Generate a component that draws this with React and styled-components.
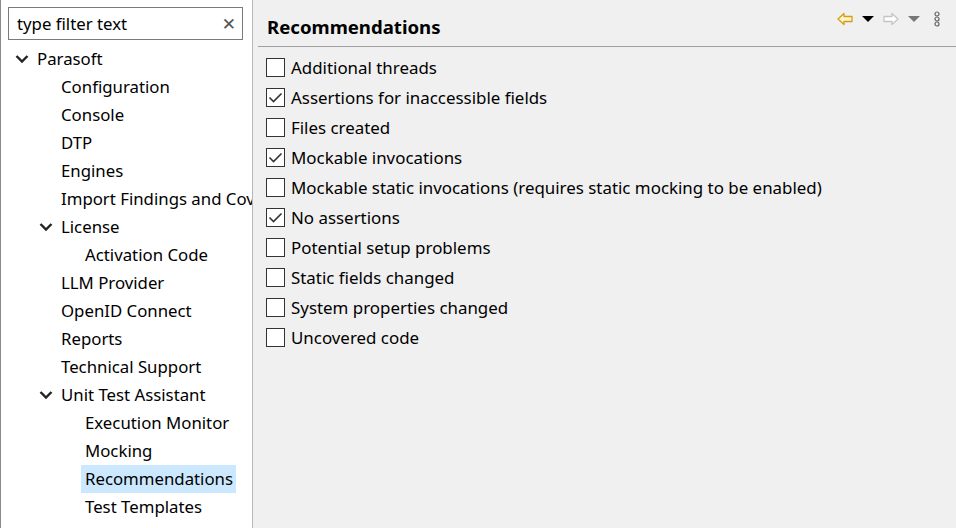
import React from 'react'
import styled, { createGlobalStyle } from 'styled-components'

const GlobalStyle = createGlobalStyle`
  html, body {
    margin: 0;
    padding: 0;
    background: #f0f0f0;
  }
  body {
    font-family: 'Noto Sans', 'Open Sans', sans-serif;
    color: #000;
  }
`

const tree = [
  { label: 'Parasoft', depth: 0, open: true },
  { label: 'Configuration', depth: 1 },
  { label: 'Console', depth: 1 },
  { label: 'DTP', depth: 1 },
  { label: 'Engines', depth: 1 },
  { label: 'Import Findings and Coverage', depth: 1 },
  { label: 'License', depth: 1, open: true },
  { label: 'Activation Code', depth: 2 },
  { label: 'LLM Provider', depth: 1 },
  { label: 'OpenID Connect', depth: 1 },
  { label: 'Reports', depth: 1 },
  { label: 'Technical Support', depth: 1 },
  { label: 'Unit Test Assistant', depth: 1, open: true },
  { label: 'Execution Monitor', depth: 2 },
  { label: 'Mocking', depth: 2 },
  { label: 'Recommendations', depth: 2, selected: true },
  { label: 'Test Templates', depth: 2 },
]

const options = [
  { label: 'Additional threads', checked: false },
  { label: 'Assertions for inaccessible fields', checked: true },
  { label: 'Files created', checked: false },
  { label: 'Mockable invocations', checked: true },
  { label: 'Mockable static invocations (requires static mocking to be enabled)', checked: false },
  { label: 'No assertions', checked: true },
  { label: 'Potential setup problems', checked: false },
  { label: 'Static fields changed', checked: false },
  { label: 'System properties changed', checked: false },
  { label: 'Uncovered code', checked: false },
]

function Chevron() {
  return (
    <svg width="14" height="10" viewBox="0 0 14 10">
      <path d="M1.5 2 L7 7.5 L12.5 2" fill="none" stroke="#222" strokeWidth="2.4" />
    </svg>
  )
}

function CheckMark() {
  return (
    <svg width="19" height="19" viewBox="0 0 19 19">
      <path d="M3.5 9.5 L7.5 13.5 L15.5 5.5" fill="none" stroke="#333" strokeWidth="1.6" />
    </svg>
  )
}

function BackArrow() {
  return (
    <svg width="16" height="14" viewBox="0 0 16 14">
      <path d="M1 7 L7 1.5 L7 4.5 L15 4.5 L15 9.5 L7 9.5 L7 12.5 Z" fill="#fff6d0" stroke="#d89a10" strokeWidth="1.3" strokeLinejoin="round" />
    </svg>
  )
}

function ForwardArrow() {
  return (
    <svg width="16" height="14" viewBox="0 0 16 14">
      <path d="M15 7 L9 1.5 L9 4.5 L1 4.5 L1 9.5 L9 9.5 L9 12.5 Z" fill="#fff" stroke="#c4c4c4" strokeWidth="1.3" strokeLinejoin="round" />
    </svg>
  )
}

function DropTri({ color }) {
  return (
    <svg width="12" height="8" viewBox="0 0 12 8">
      <path d="M0 1 L12 1 L6 7 Z" fill={color} />
    </svg>
  )
}

function Dots() {
  return (
    <svg width="8" height="16" viewBox="0 0 8 16">
      <circle cx="4" cy="3" r="2" fill="none" stroke="#666" strokeWidth="1.2" />
      <circle cx="4" cy="8" r="2" fill="none" stroke="#666" strokeWidth="1.2" />
      <circle cx="4" cy="13" r="2" fill="none" stroke="#666" strokeWidth="1.2" />
    </svg>
  )
}

export default function App() {
  return (
    <>
      <GlobalStyle />
      <Window>
        <Sidebar>
          <Filter>
            <FilterText>type filter text</FilterText>
            <ClearBtn>✕</ClearBtn>
          </Filter>
          <Tree>
            {tree.map((n) => (
              <TreeRow key={n.label} depth={n.depth}>
                <Twisty>{n.open && <Chevron />}</Twisty>
                <TreeLabel selected={n.selected}>{n.label}</TreeLabel>
              </TreeRow>
            ))}
          </Tree>
        </Sidebar>
        <Main>
          <Header>
            <Title>Recommendations</Title>
            <Toolbar>
              <ToolBtn><BackArrow /></ToolBtn>
              <ToolBtn><DropTri color="#000" /></ToolBtn>
              <ToolBtn><ForwardArrow /></ToolBtn>
              <ToolBtn><DropTri color="#777" /></ToolBtn>
              <ToolBtn><Dots /></ToolBtn>
            </Toolbar>
          </Header>
          <Options>
            {options.map((o) => (
              <OptionRow key={o.label}>
                <Box>{o.checked && <CheckMark />}</Box>
                <OptionLabel>{o.label}</OptionLabel>
              </OptionRow>
            ))}
          </Options>
        </Main>
      </Window>
    </>
  )
}

const Window = styled.div`
  display: flex;
  width: 956px;
  height: 528px;
  overflow: hidden;
`

const Sidebar = styled.div`
  width: 253px;
  flex-shrink: 0;
  box-sizing: border-box;
  background: #fff;
  border-left: 1px solid #8a8a8a;
  border-right: 1px solid #b8b8b8;
  overflow: hidden;
  padding-top: 7px;
`

const Filter = styled.div`
  margin-left: 7px;
  width: 235px;
  height: 33px;
  box-sizing: border-box;
  border: 1px solid #7a7a7a;
  display: flex;
  align-items: center;
  justify-content: space-between;
  padding: 0 6px 0 8px;
`

const FilterText = styled.span`
  font-size: 16.8px;
  white-space: nowrap;
`

const ClearBtn = styled.span`
  font-size: 17px;
  font-weight: bold;
  color: #555;
  font-family: 'DejaVu Sans', sans-serif;
`

const Tree = styled.div`
  margin-top: 5px;
`

const TreeRow = styled.div`
  display: flex;
  align-items: center;
  height: 28px;
  padding-left: ${(p) => 13 + p.depth * 24}px;
  white-space: nowrap;
`

const Twisty = styled.span`
  width: 23px;
  flex-shrink: 0;
  display: flex;
  align-items: center;
  padding-left: 1px;
  box-sizing: border-box;
`

const TreeLabel = styled.span`
  font-size: 16.8px;
  line-height: 28px;
  padding: 0 3px 0 4px;
  margin-left: -4px;
  background: ${(p) => (p.selected ? '#cce8ff' : 'transparent')};
`

const Main = styled.div`
  flex: 1;
  background: #f0f0f0;
  padding-left: 5px;
`

const Header = styled.div`
  display: flex;
  align-items: center;
  justify-content: space-between;
  height: 46px;
  border-bottom: 1px solid #a0a0a0;
  padding: 0 8px 0 9px;
`

const Title = styled.h1`
  margin: 0;
  font-size: 18.6px;
  font-weight: bold;
  padding-top: 6px;
`

const Toolbar = styled.div`
  display: flex;
  align-items: center;
  gap: 6px;
  margin-top: -8px;
  margin-right: 3px;
`

const ToolBtn = styled.span`
  display: flex;
  align-items: center;
  justify-content: center;
  min-width: 17px;
`

const Options = styled.div`
  padding: 5px 0 0 8px;
`

const OptionRow = styled.div`
  display: flex;
  align-items: center;
  height: 30px;
`

const Box = styled.span`
  width: 19px;
  height: 19px;
  box-sizing: border-box;
  border: 1px solid #333;
  background: #fff;
  margin-right: 6px;
  display: flex;
  align-items: center;
  justify-content: center;
  flex-shrink: 0;
  svg { margin: -1px; }
`

const OptionLabel = styled.span`
  font-size: 16.9px;
  white-space: nowrap;
`
